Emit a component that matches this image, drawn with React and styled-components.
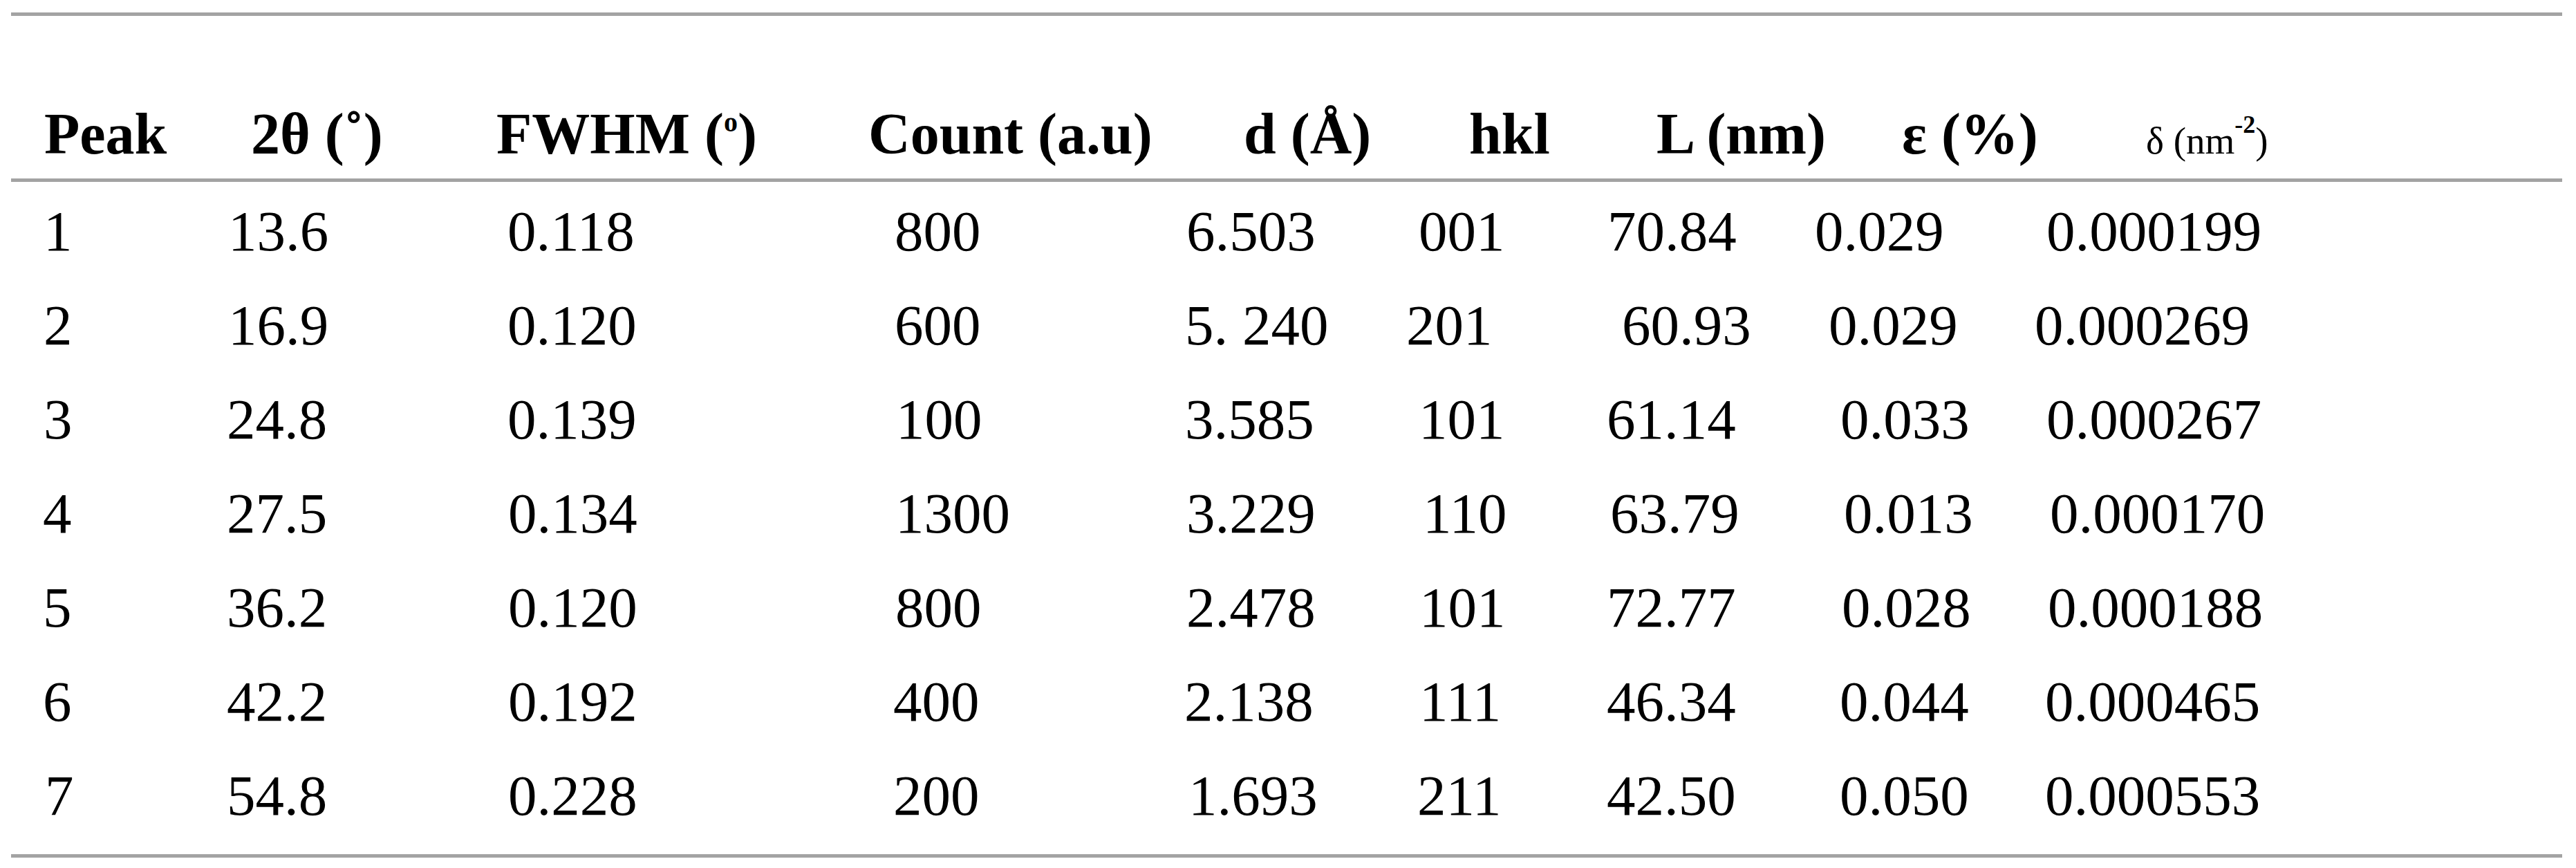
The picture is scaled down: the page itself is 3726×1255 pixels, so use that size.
import React from 'react';
import styled, { createGlobalStyle } from 'styled-components';

const GlobalStyle = createGlobalStyle`
  * {
    box-sizing: border-box;
  }
  body {
    margin: 0;
    background: #fff;
  }
`;

// column starts measured off the reference, relative to the first column
const columns = '266px 388px 538px 458px 320px 290px 301px 318px 1fr';

const Sheet = styled.section`
  margin: 18px 0 0 16px;
  width: 3690px;
  border-top: 5px solid #a3a3a3;
  border-bottom: 5px solid #a3a3a3;
  font-family: 'Liberation Serif', 'Times New Roman', serif;
  color: #000;
`;

const Row = styled.div`
  display: grid;
  grid-template-columns: ${columns};
  padding-left: 46px;
`;

const HeadRow = styled(Row)`
  height: 240px;
  align-items: end;
  padding-bottom: 14px;
  border-bottom: 5px solid #a3a3a3;
  font-size: 84px;
  font-weight: bold;
  line-height: 100px;
`;

const Body = styled.div`
  padding: 3px 0 17px;
`;

const DataRow = styled(Row)`
  height: 136px;
  font-size: 83px;
  line-height: 136px;
`;

const Cell = styled.div`
  padding-left: ${(p) => p.$x}px;
  white-space: nowrap;
`;

const Small = styled.span`
  font-size: 55px;
  font-weight: normal;
  line-height: 0;
`;

const Sup = styled.span`
  font-size: ${(p) => p.$size}px;
  font-weight: bold;
  vertical-align: ${(p) => p.$raise}px;
  line-height: 0;
`;

const headers = [
  { key: 'peak', x: 2, label: 'Peak' },
  { key: 'theta', x: 35, label: '2θ (˚)' },
  {
    key: 'fwhm',
    x: 2,
    label: (
      <>
        FWHM (<Sup $size={40} $raise={32}>o</Sup>)
      </>
    ),
  },
  { key: 'count', x: 2, label: 'Count (a.u)' },
  { key: 'd', x: 87, label: 'd (Å)' },
  { key: 'hkl', x: 93, label: 'hkl' },
  { key: 'size', x: 74, label: 'L (nm)' },
  { key: 'strain', x: 128, label: 'ε (%)' },
  {
    key: 'delta',
    x: 163,
    label: (
      <Small>
        δ (nm<Sup $size={36} $raise={30}>-2</Sup>)
      </Small>
    ),
  },
];

const rows = [
  {
    cells: ['1', '13.6', '0.118', '800', '6.503', '001', '70.84', '0.029', '0.000199'],
    x: [1, 2, 18, 40, 4, 20, 3, 2, 19],
  },
  {
    cells: ['2', '16.9', '0.120', '600', '5. 240', '201', '60.93', '0.029', '0.000269'],
    x: [1, 2, 18, 40, 2, 2, 24, 22, 2],
  },
  {
    cells: ['3', '24.8', '0.139', '100', '3.585', '101', '61.14', '0.033', '0.000267'],
    x: [1, 0, 18, 42, 2, 20, 2, 39, 19],
  },
  {
    cells: ['4', '27.5', '0.134', '1300', '3.229', '110', '63.79', '0.013', '0.000170'],
    x: [0, 0, 19, 41, 4, 26, 7, 44, 24],
  },
  {
    cells: ['5', '36.2', '0.120', '800', '2.478', '101', '72.77', '0.028', '0.000188'],
    x: [0, 0, 19, 41, 4, 21, 2, 41, 21],
  },
  {
    cells: ['6', '42.2', '0.192', '400', '2.138', '111', '46.34', '0.044', '0.000465'],
    x: [0, 0, 19, 38, 1, 21, 2, 38, 17],
  },
  {
    cells: ['7', '54.8', '0.228', '200', '1.693', '211', '42.50', '0.050', '0.000553'],
    x: [3, 0, 19, 38, 7, 18, 2, 38, 17],
  },
];

export default function App() {
  return (
    <>
      <GlobalStyle />
      <Sheet>
        <HeadRow>
          {headers.map((h) => (
            <Cell key={h.key} $x={h.x}>
              {h.label}
            </Cell>
          ))}
        </HeadRow>
        <Body>
          {rows.map((row) => (
            <DataRow key={row.cells[0]}>
              {row.cells.map((value, i) => (
                <Cell key={i} $x={row.x[i]}>
                  {value}
                </Cell>
              ))}
            </DataRow>
          ))}
        </Body>
      </Sheet>
    </>
  );
}
